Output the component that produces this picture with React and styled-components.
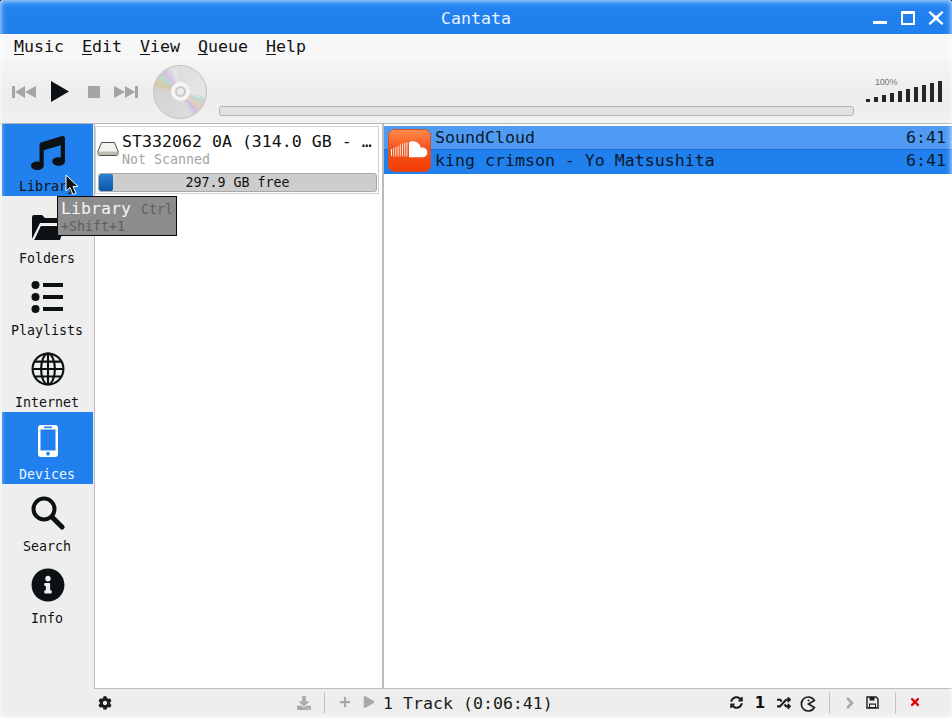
import React from "react";
import styled, { createGlobalStyle } from "styled-components";
import {
  FaCog,
  FaDownload,
  FaInfoCircle,
  FaMusic,
  FaPlus,
  FaPlay,
  FaRandom,
  FaSyncAlt,
  FaTimes,
  FaAngleRight,
} from "react-icons/fa";

const GlobalStyle = createGlobalStyle`
  html, body {
    margin: 0;
    padding: 0;
    background: #000;
  }
`;

const Window = styled.div`
  position: relative;
  width: 952px;
  height: 718px;
  overflow: hidden;
  display: flex;
  flex-direction: column;
  font-family: "DejaVu Sans Mono", monospace;
  font-size: 16.6px;
  color: #111;
  background: #eeeeee;
  border-radius: 3px 3px 0 0;
`;

const EdgeGlow = styled.div`
  position: absolute;
  inset: 0;
  pointer-events: none;
  box-shadow: inset 0 0 5px 1px rgba(255, 255, 255, 0.7);
`;

const TitleBar = styled.div`
  height: 34px;
  flex: none;
  box-sizing: border-box;
  padding-top: 2px;
  display: flex;
  align-items: center;
  justify-content: center;
  position: relative;
  background: linear-gradient(#2f8ff3, #2181ef 30%, #2080ee);
  color: #e8f2fd;
`;

const WindowButtons = styled.div`
  position: absolute;
  right: 0;
  top: 1px;
  height: 34px;
  display: flex;
  align-items: center;
`;

const WindowButton = styled.svg`
  width: 16px;
  height: 16px;
  margin: 0 8px 0 4px;
  display: block;
`;

const MenuBar = styled.div`
  height: 26px;
  flex: none;
  display: flex;
  align-items: center;
  gap: 18px;
  padding: 0 14px;
  background: #f7f7f7;
`;

const MenuItem = styled.span`
  line-height: 24px;
  u {
    text-underline-offset: 2px;
  }
`;

const ToolBar = styled.div`
  height: 64px;
  flex: none;
  display: flex;
  align-items: center;
  padding-left: 12px;
  background: linear-gradient(#f5f5f5, #ececec 60%, #f1f1f1);
  border-bottom: 1px solid #b5b5b5;
  box-sizing: border-box;
`;

const TransportIcon = styled.svg`
  display: block;
  flex: none;
  margin-right: ${(props) => props.$gap}px;
`;

const Disc = styled.div`
  position: relative;
  width: 54px;
  height: 54px;
  flex: none;
  box-sizing: border-box;
  margin-right: 12px;
  border-radius: 50%;
  border: 1px solid #c0c0c0;
  background: conic-gradient(
    #dedede 0deg,
    #e6e6e6 95deg,
    #bcd8cf 112deg,
    #e6d0b4 125deg,
    #cdbfe0 140deg,
    #dcdcdc 158deg,
    #d4d4d4 270deg,
    #d9c9a6 292deg,
    #bed9cc 308deg,
    #d8c3e0 325deg,
    #e4e4e4 345deg,
    #dedede 360deg
  );
  display: flex;
  align-items: center;
  justify-content: center;
`;

const DiscRing = styled.div`
  width: 19px;
  height: 19px;
  border-radius: 50%;
  background: #f5f5f5;
  display: flex;
  align-items: center;
  justify-content: center;
`;

const DiscHole = styled.div`
  box-sizing: border-box;
  width: 11px;
  height: 11px;
  border-radius: 50%;
  border: 2px solid #c9c9c9;
  background: #ededed;
`;

const Seek = styled.div`
  flex: none;
  width: 633px;
  height: 8px;
  margin-top: 38px;
  border: 1px solid #b3b3b3;
  border-radius: 3px;
  background: #e2e2e2;
`;

const Volume = styled.div`
  position: relative;
  margin-left: 12px;
  margin-top: -2px;
  width: 77px;
  height: 22px;
  flex: none;
`;

const VolumeBars = styled.div`
  height: 22px;
  display: flex;
  align-items: flex-end;
  gap: 4px;
`;

const VolumeBar = styled.div`
  width: 4px;
  background: #262626;
`;

const VolumeText = styled.span`
  position: absolute;
  left: 9px;
  top: -3px;
  font-family: "Liberation Sans", sans-serif;
  font-size: 9px;
  letter-spacing: -0.2px;
  color: #777;
`;

const Main = styled.div`
  flex: 1;
  min-height: 0;
  display: flex;
  padding-left: 2px;
`;

const Sidebar = styled.div`
  width: 91px;
  flex: none;
  display: flex;
  flex-direction: column;
`;

const SideItem = styled.div`
  height: 72px;
  flex: none;
  display: flex;
  flex-direction: column;
  align-items: center;
  font-size: 13.3px;
  padding-top: 12px;
  box-sizing: border-box;
  background: ${(props) => (props.$active ? "#2080ee" : "transparent")};
  color: ${(props) => (props.$light ? "#eaf4ff" : "#111")};
`;

const SideIcon = styled.div`
  height: 34px;
  font-size: 34px;
  line-height: 0;
  color: ${(props) => (props.$light ? "#fff" : "#0c1114")};
  svg {
    display: block;
  }
`;

const SideLabel = styled.div`
  margin: 9px 1px 0 0;
  line-height: 16px;
`;

const Content = styled.div`
  flex: 1;
  min-width: 0;
  display: flex;
  flex-direction: column;
`;

const Panels = styled.div`
  height: 565px;
  flex: none;
  display: flex;
  margin-left: 1px;
`;

const Panel = styled.div`
  box-sizing: border-box;
  width: ${(props) => props.$width}px;
  background: #fff;
  border: 1px solid #b9bdb9;
  border-top: none;
  border-right: ${(props) => (props.$open ? "none" : "1px solid #b9bdb9")};
  padding: 2px 0 0 0;
`;

const DeviceCard = styled.div`
  box-sizing: border-box;
  width: 284px;
  height: 68px;
  border: 1px solid #cfcfcf;
  display: flex;
  flex-direction: column;
  padding: 0 2px;
`;

const DeviceTop = styled.div`
  display: flex;
  align-items: center;
  height: 44px;
`;

const DeviceText = styled.div`
  margin-left: 3px;
  width: 256px;
  white-space: nowrap;
  overflow: hidden;
`;

const DeviceName = styled.div`
  line-height: 20px;
`;

const DeviceStatus = styled.div`
  font-size: 13.3px;
  line-height: 15px;
  color: #a3a3a3;
`;

const Capacity = styled.div`
  position: relative;
  box-sizing: border-box;
  width: 279px;
  height: 19px;
  margin-top: 2px;
  border: 1px solid #a9a9a9;
  border-radius: 3px;
  background: #cdcdcd;
  font-size: 13.3px;
  line-height: 18px;
  text-align: center;
  overflow: hidden;
`;

const CapacityFill = styled.div`
  position: absolute;
  left: 0;
  top: 0;
  bottom: 0;
  width: 14px;
  background: linear-gradient(#2b7fd6, #0a55a6);
  border-radius: 2px;
`;

const CapacityText = styled.span`
  position: relative;
`;

const Group = styled.div`
  display: flex;
  position: relative;
  width: 100%;
  height: 48px;
  background: #2080ee;
`;

const GroupIcon = styled.svg`
  position: absolute;
  left: 4px;
  top: 3px;
  width: 43px;
  height: 43px;
`;

const GroupRows = styled.div`
  flex: 1;
  display: flex;
  flex-direction: column;
`;

const Row = styled.div`
  height: 24px;
  box-sizing: border-box;
  display: flex;
  justify-content: space-between;
  align-items: center;
  padding: 0 6px ${(props) => (props.$header ? 1 : 4)}px 51px;
  background: ${(props) => (props.$header ? "#4f9bf4" : "#2080ee")};
  border-bottom: ${(props) => (props.$header ? "1px solid #1a6bd0" : "none")};
  color: #0b1a2a;
`;

const StatusBar = styled.div`
  height: 29px;
  box-sizing: border-box;
  padding: 0 0 1px 4px;
  flex: none;
  display: flex;
  align-items: center;
  font-size: 16.6px;
`;

const StatusIcon = styled.span`
  display: block;
  width: ${(props) => props.$w || 16}px;
  height: 14px;
  flex: none;
  margin-left: ${(props) => props.$ml || 0}px;
  color: ${(props) => props.$color || "#1c1c1c"};
  font-size: 14px;
  line-height: 14px;
  text-align: center;
  svg {
    display: block;
    margin: 0 auto;
  }
`;

const StatusText = styled.span`
  margin-left: 6px;
  flex: 1;
  color: #1a1a1a;
  white-space: nowrap;
`;

const StatusOne = styled.span`
  width: 16px;
  margin-left: 8px;
  flex: none;
  text-align: center;
  font-weight: bold;
  font-size: 15px;
  line-height: 14px;
  font-family: "DejaVu Sans", sans-serif;
`;

const Separator = styled.div`
  width: 1px;
  height: 22px;
  flex: none;
  margin-left: ${(props) => props.$ml}px;
  background: #c4c4c4;
`;

const Tooltip = styled.div`
  position: absolute;
  left: 57px;
  top: 196px;
  box-sizing: border-box;
  width: 120px;
  height: 40px;
  padding: 1px 3px;
  background: #8c8c8c;
  border: 1px solid #0a0a0a;
  line-height: 21px;
  color: #f4f4f4;
  white-space: normal;
`;

const TooltipKey = styled.span`
  font-size: 13.3px;
  color: #5f5f5f;
`;

const TooltipKeyLine = styled.div`
  font-size: 13.3px;
  line-height: 14px;
  color: #5f5f5f;
`;

const Cursor = styled.svg`
  position: absolute;
  left: 65px;
  top: 174px;
  width: 14px;
  height: 22px;
`;

const HddWrap = styled.svg`
  flex: none;
  margin-left: -1px;
`;

const FolderIcon = () => (
  <svg width="34" height="34" viewBox="0 0 34 34">
    <path d="M1 31V9a2 2 0 0 1 2-2h8l3 3h13a2 2 0 0 1 2 2v3H9L1 31z" fill="currentColor" />
    <path d="M3 32l7-15h24l-5 15H3z" fill="currentColor" />
    <path d="M3 31l6.5-13.5H30" fill="none" stroke="#fff" strokeWidth="1" />
  </svg>
);

const ListIcon = () => (
  <svg width="34" height="34" viewBox="0 0 34 34">
    <circle cx="4.5" cy="5" r="4" fill="currentColor" />
    <circle cx="4.5" cy="17" r="4" fill="currentColor" />
    <circle cx="4.5" cy="29" r="4" fill="currentColor" />
    <rect x="12" y="3" width="20" height="4" fill="currentColor" />
    <rect x="12" y="15" width="20" height="4" fill="currentColor" />
    <rect x="12" y="27" width="20" height="4" fill="currentColor" />
  </svg>
);

const GlobeIcon = () => (
  <svg width="34" height="34" viewBox="0 0 32 32" fill="none" stroke="currentColor" strokeWidth="2">
    <circle cx="16" cy="16" r="14.5" />
    <ellipse cx="16" cy="16" rx="6.5" ry="14.5" />
    <path d="M16 1.5v29M1.5 16h29M3.5 9h25M3.5 23h25" />
  </svg>
);

const PhoneIcon = () => (
  <svg width="34" height="34" viewBox="0 0 34 34">
    <rect x="7" y="1" width="20" height="32" rx="3" fill="currentColor" />
    <rect x="9.5" y="5.5" width="15" height="21" fill="#2080ee" />
    <rect x="13" y="2.5" width="8" height="1.6" fill="#2080ee" />
    <circle cx="17" cy="29.7" r="1.9" fill="#2080ee" />
  </svg>
);

const SearchIcon = () => (
  <svg width="34" height="34" viewBox="0 0 34 34" fill="none" stroke="currentColor">
    <circle cx="13" cy="13" r="10.5" strokeWidth="4" />
    <path d="M21.500 21.500L31 31" strokeWidth="5" strokeLinecap="round" />
  </svg>
);

const SaveIcon = () => (
  <svg width="13" height="13" viewBox="0 0 13 13">
    <path d="M1 1h9l2 2v9H1z" fill="none" stroke="#1c1c1c" strokeWidth="1.4" />
    <path d="M3.500 1h5v3.500h-5zM3 7.500h7V12H3z" fill="#1c1c1c" />
    <rect x="4" y="8.700" width="5" height="2.300" fill="#eee" />
  </svg>
);

const SIDE_ITEMS = [
  { label: "Library", icon: <FaMusic />, active: true },
  { label: "Folders", icon: <FolderIcon /> },
  { label: "Playlists", icon: <ListIcon /> },
  { label: "Internet", icon: <GlobeIcon /> },
  { label: "Devices", icon: <PhoneIcon />, active: true, light: true },
  { label: "Search", icon: <SearchIcon /> },
  { label: "Info", icon: <FaInfoCircle /> },
];

const MENUS = [
  ["M", "usic"],
  ["E", "dit"],
  ["V", "iew"],
  ["Q", "ueue"],
  ["H", "elp"],
];

const VOLUME_HEIGHTS = [3, 5, 7, 9, 11, 13, 15, 17, 19, 21];

const SkipIcon = ({ flip, gap }) => (
  <TransportIcon $gap={gap} width="24" height="12" viewBox="0 0 24 12" fill="#a3a5a5">
    <g transform={flip ? "translate(24 0) scale(-1 1)" : undefined}>
      <rect x="0" y="0" width="3" height="12" />
      <path d="M13 0v12L3 6zM24 0v12L13 6z" />
    </g>
  </TransportIcon>
);

const HddIcon = () => (
  <HddWrap width="22" height="18" viewBox="0 0 22 18">
    <path d="M4.5 2.5h13L21 11v3a1.5 1.5 0 0 1-1.5 1.5h-17A1.5 1.5 0 0 1 1 14v-3z" fill="#f2f2ee" stroke="#4c4c4c" />
    <path d="M1.5 11.5h19v2.5a1 1 0 0 1-1 1h-17a1 1 0 0 1-1-1z" fill="#bdbdb4" />
  </HddWrap>
);

const SoundCloudIcon = () => (
  <GroupIcon viewBox="0 0 43 43">
    <defs>
      <linearGradient id="scBg" x1="0" y1="0" x2="0" y2="1">
        <stop offset="0" stopColor="#ff8a4a" />
        <stop offset="0.45" stopColor="#f2551f" />
        <stop offset="1" stopColor="#f53b00" />
      </linearGradient>
    </defs>
    <rect x="0.5" y="0.5" width="42" height="42" rx="6" fill="url(#scBg)" stroke="#d2532a" />
    <path d="M21 13.5c1-.8 2.4-1.3 3.9-1.3 4 0 7.300 2.800 7.800 6.600.5-.2 1-.3 1.600-.3 2.800 0 5 2.200 5 4.900s-2.200 4.900-5 4.900H21z" fill="#fff" />
    <path d="M3 20h1v7H3zM5.200 19h1v8.500h-1zM7.400 18h1v9.500h-1zM9.600 17h1v10.500h-1zM11.800 15.500h1v12h-1zM14 14.500h1v13h-1zM16.200 14h1v13.500h-1zM18.400 13.500h1v14h-1z" fill="#fff" fillOpacity="0.85" />
  </GroupIcon>
);

const PacmanIcon = () => (
  <svg width="16" height="16" viewBox="0 0 16 16" fill="none" stroke="#1c1c1c" strokeWidth="1.7">
    <path d="M14.400 4.500A7 7 0 1 0 14.400 11.500L8.500 8z" />
    <circle cx="8.500" cy="4.500" r="1" fill="#1c1c1c" stroke="none" />
  </svg>
);

const App = () => {
  return (
    <Window>
      <GlobalStyle />
      <TitleBar>
        Cantata
        <WindowButtons>
          <WindowButton viewBox="0 0 16 16">
            <rect x="1" y="11" width="14" height="3" fill="#fff" />
          </WindowButton>
          <WindowButton viewBox="0 0 16 16">
            <path d="M1 1h14v14H1zM3 4v9h10V4z" fill="#fff" fillRule="evenodd" />
          </WindowButton>
          <WindowButton viewBox="0 0 16 16">
            <path d="M2 1l6 5 6-5 1.500 1.500L10 8l5.500 5.500L14 15 8 10l-6 5-1.500-1.500L6 8 .5 2.500z" fill="#fff" />
          </WindowButton>
        </WindowButtons>
      </TitleBar>

      <MenuBar>
        {MENUS.map(([key, rest]) => (
          <MenuItem key={key}>
            <u>{key}</u>
            {rest}
          </MenuItem>
        ))}
      </MenuBar>

      <ToolBar>
        <SkipIcon gap={15} />
        <TransportIcon $gap={19} width="18" height="21" viewBox="0 0 18 21" fill="#0c1114">
          <path d="M0 0l18 10.500L0 21z" />
        </TransportIcon>
        <TransportIcon $gap={14} width="12" height="12" viewBox="0 0 12 12" fill="#a3a5a5">
          <rect width="12" height="12" />
        </TransportIcon>
        <SkipIcon flip gap={15} />
        <Disc>
          <DiscRing>
            <DiscHole />
          </DiscRing>
        </Disc>
        <Seek />
        <Volume>
          <VolumeText>100%</VolumeText>
          <VolumeBars>
            {VOLUME_HEIGHTS.map((h) => (
              <VolumeBar key={h} style={{ height: h }} />
            ))}
          </VolumeBars>
        </Volume>
      </ToolBar>

      <Main>
        <Sidebar>
          {SIDE_ITEMS.map((item) => (
            <SideItem key={item.label} $active={item.active} $light={item.light}>
              <SideIcon $light={item.light}>{item.icon}</SideIcon>
              <SideLabel>{item.label}</SideLabel>
            </SideItem>
          ))}
        </Sidebar>

        <Content>
          <Panels>
            <Panel $width={289}>
              <DeviceCard>
                <DeviceTop>
                  <HddIcon />
                  <DeviceText>
                    <DeviceName>ST332062 0A (314.0 GB - …</DeviceName>
                    <DeviceStatus>Not Scanned</DeviceStatus>
                  </DeviceText>
                </DeviceTop>
                <Capacity>
                  <CapacityFill />
                  <CapacityText>297.9 GB free</CapacityText>
                </Capacity>
              </DeviceCard>
            </Panel>
            <Panel $width={569} $open>
              <Group>
                <SoundCloudIcon />
                <GroupRows>
                  <Row $header>
                    <span>SoundCloud</span>
                    <span>6:41</span>
                  </Row>
                  <Row>
                    <span>king crimson - Yo Matsushita</span>
                    <span>6:41</span>
                  </Row>
                </GroupRows>
              </Group>
            </Panel>
          </Panels>

          <StatusBar>
            <StatusIcon><FaCog /></StatusIcon>
            <StatusIcon $ml={183} $color="#a9a9a9"><FaDownload /></StatusIcon>
            <Separator $ml={12} />
            <StatusIcon $ml={12} $color="#a9a9a9"><FaPlus size={12} /></StatusIcon>
            <StatusIcon $ml={8} $color="#a9a9a9"><FaPlay size={12} /></StatusIcon>
            <StatusText>1 Track (0:06:41)</StatusText>
            <StatusIcon><FaSyncAlt size={13} /></StatusIcon>
            <StatusOne>1</StatusOne>
            <StatusIcon $ml={8}><FaRandom size={14} /></StatusIcon>
            <StatusIcon $ml={8}><PacmanIcon /></StatusIcon>
            <Separator $ml={13} />
            <StatusIcon $ml={11} $color="#a9a9a9"><FaAngleRight size={18} style={{ marginTop: -2 }} /></StatusIcon>
            <StatusIcon $ml={7}><SaveIcon /></StatusIcon>
            <Separator $ml={15} />
            <StatusIcon $ml={11} $color="#e00000"><FaTimes size={12} /></StatusIcon>
            <StatusIcon $w={29} />
          </StatusBar>
        </Content>
      </Main>

      <Tooltip>
        Library <TooltipKey>Ctrl</TooltipKey>
        <TooltipKeyLine>+Shift+1</TooltipKeyLine>
      </Tooltip>
      <Cursor viewBox="0 0 14 22">
        <path d="M1 1v16l4-3.500 3 7 3-1.300-3-6.700h5z" fill="#0c1114" stroke="#fff" strokeWidth="1" />
      </Cursor>
      <EdgeGlow />
    </Window>
  );
};

export default App;
